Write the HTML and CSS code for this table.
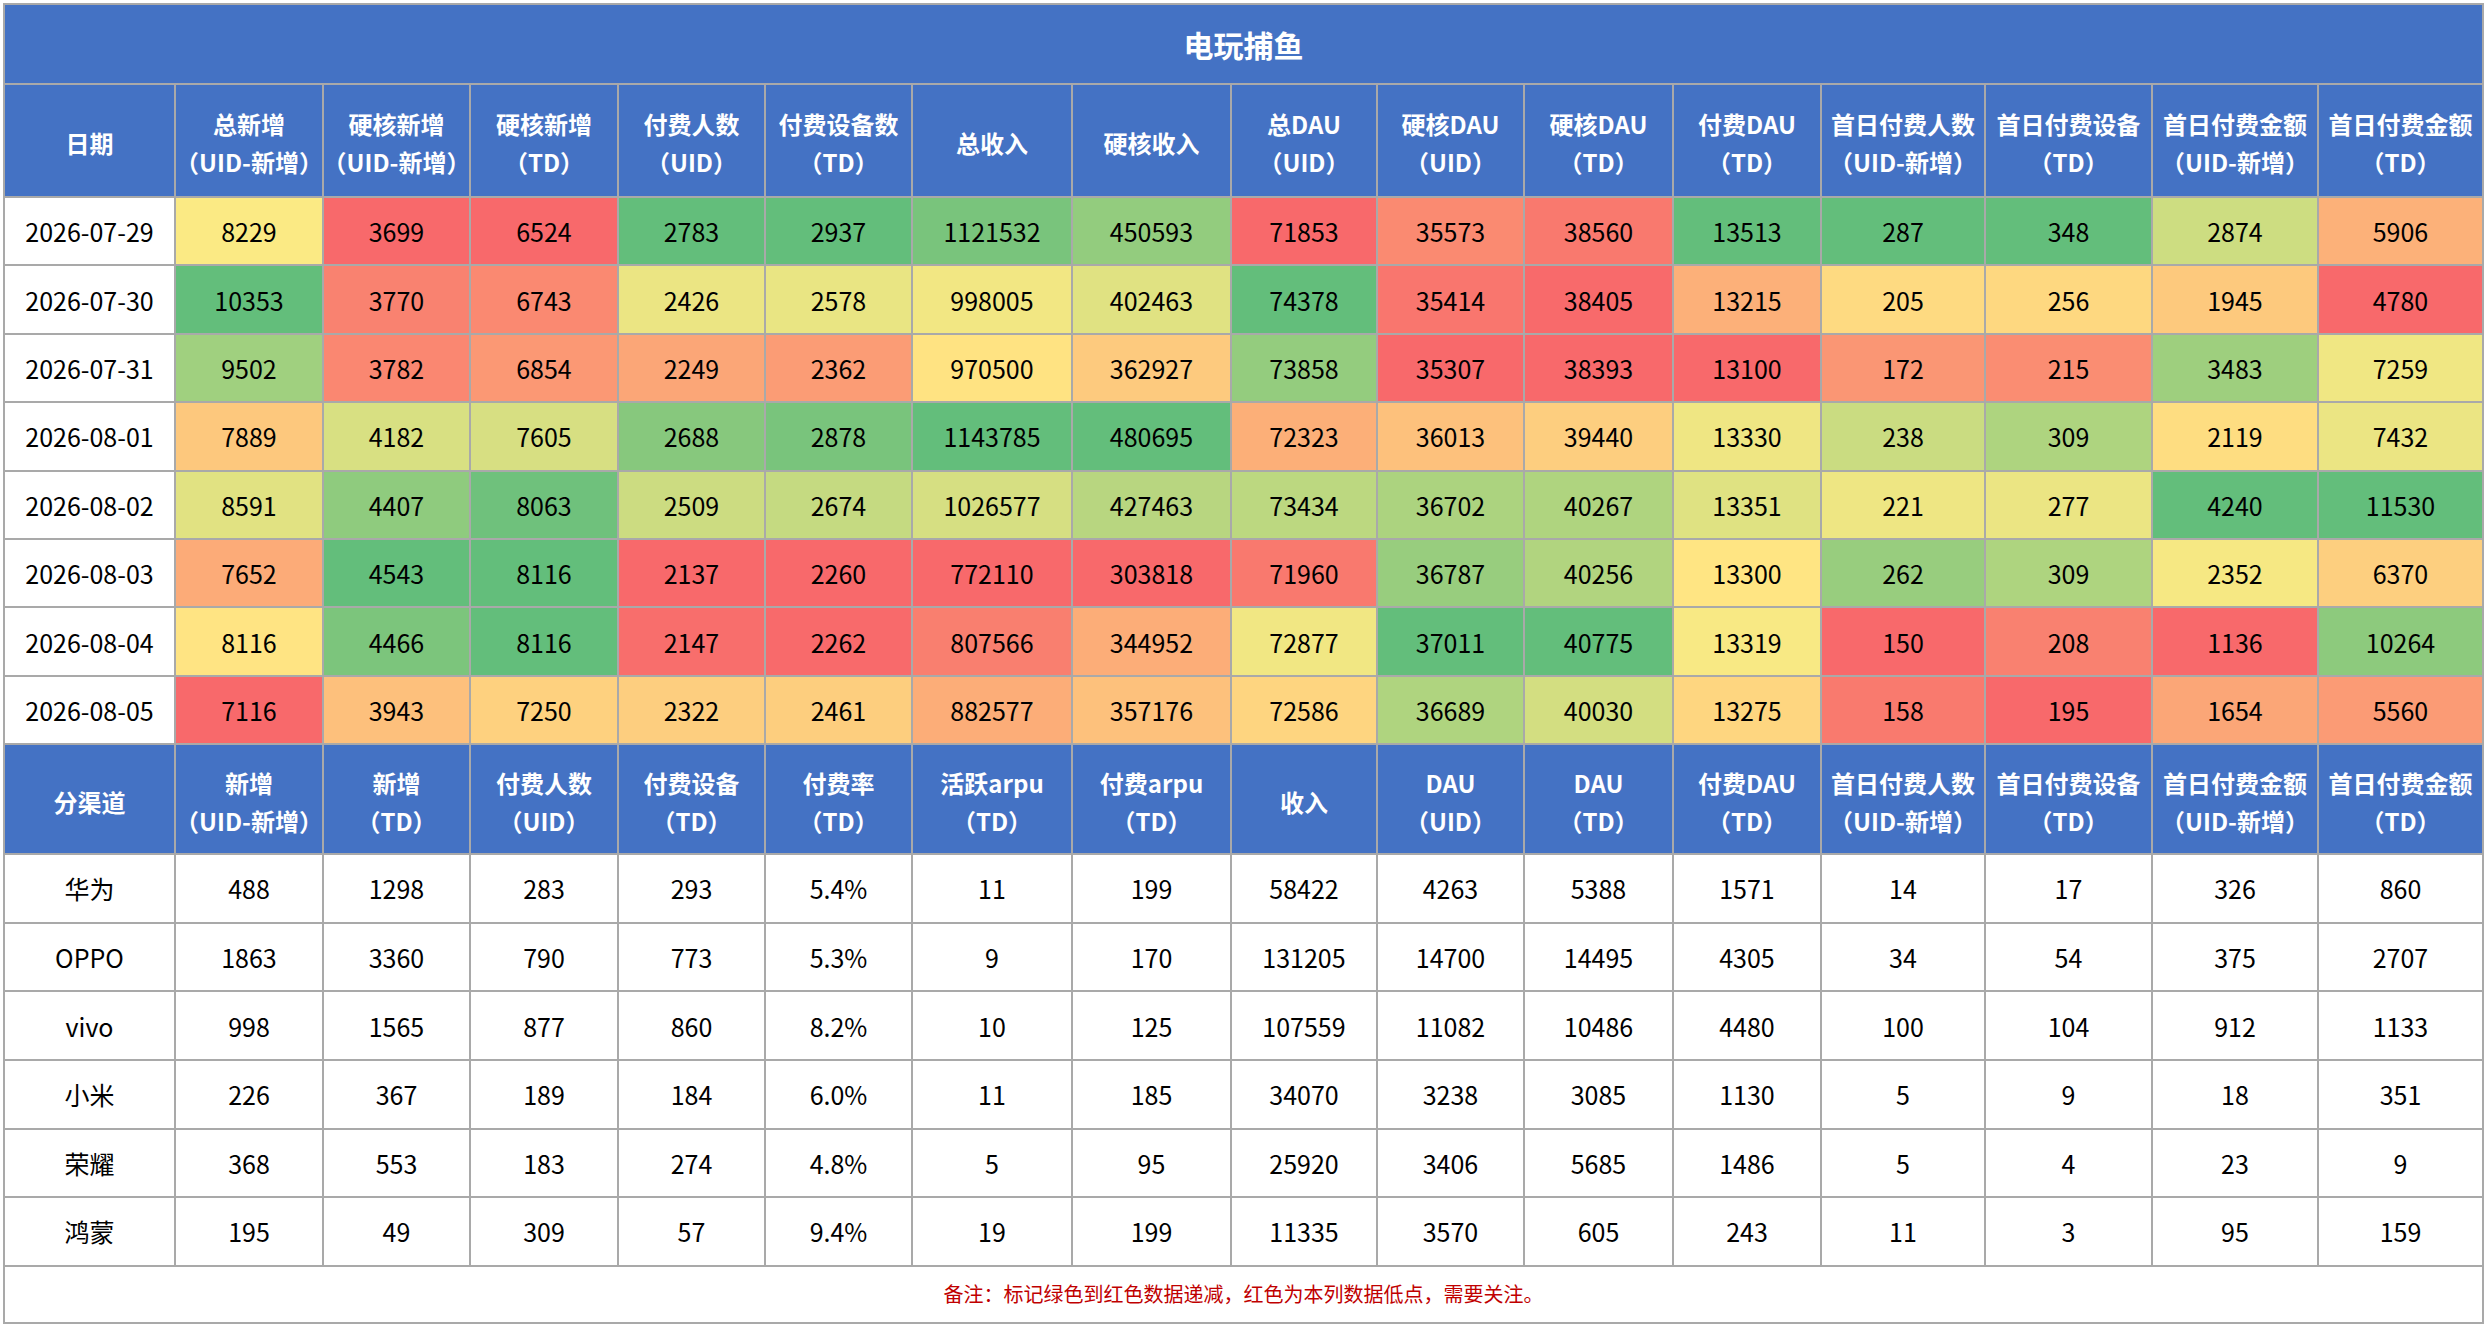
FILE: index.html
```html
<!DOCTYPE html>
<html lang="zh-CN">
<head>
<meta charset="utf-8">
<title>电玩捕鱼</title>
<link rel="stylesheet" href="styles.css">
</head>
<body>
<table class="report">
  <colgroup>
    <col class="c-first">
    <col class="c-148"><col class="c-147"><col class="c-148"><col class="c-147"><col class="c-147">
    <col class="c-160"><col class="c-159"><col class="c-146"><col class="c-147"><col class="c-149">
    <col class="c-148"><col class="c-164"><col class="c-167"><col class="c-166"><col class="c-165">
  </colgroup>
  <tbody>
    <tr class="title-row"><th colspan="16">电玩捕鱼</th></tr>
    <tr class="head-row">
      <th>日期</th>
      <th>总新增<span class="l2">（UID-新增）</span></th>
      <th>硬核新增<span class="l2">（UID-新增）</span></th>
      <th>硬核新增<span class="l2">（TD）</span></th>
      <th>付费人数<span class="l2">（UID）</span></th>
      <th>付费设备数<span class="l2">（TD）</span></th>
      <th>总收入</th>
      <th>硬核收入</th>
      <th>总DAU<span class="l2">（UID）</span></th>
      <th>硬核DAU<span class="l2">（UID）</span></th>
      <th>硬核DAU<span class="l2">（TD）</span></th>
      <th>付费DAU<span class="l2">（TD）</span></th>
      <th>首日付费人数<span class="l2">（UID-新增）</span></th>
      <th>首日付费设备<span class="l2">（TD）</span></th>
      <th>首日付费金额<span class="l2">（UID-新增）</span></th>
      <th>首日付费金额<span class="l2">（TD）</span></th>
    </tr>
    <tr class="scale"><td>2026-07-29</td><td>8229</td><td>3699</td><td>6524</td><td>2783</td><td>2937</td><td>1121532</td><td>450593</td><td>71853</td><td>35573</td><td>38560</td><td>13513</td><td>287</td><td>348</td><td>2874</td><td>5906</td></tr>
    <tr class="scale"><td>2026-07-30</td><td>10353</td><td>3770</td><td>6743</td><td>2426</td><td>2578</td><td>998005</td><td>402463</td><td>74378</td><td>35414</td><td>38405</td><td>13215</td><td>205</td><td>256</td><td>1945</td><td>4780</td></tr>
    <tr class="scale"><td>2026-07-31</td><td>9502</td><td>3782</td><td>6854</td><td>2249</td><td>2362</td><td>970500</td><td>362927</td><td>73858</td><td>35307</td><td>38393</td><td>13100</td><td>172</td><td>215</td><td>3483</td><td>7259</td></tr>
    <tr class="scale"><td>2026-08-01</td><td>7889</td><td>4182</td><td>7605</td><td>2688</td><td>2878</td><td>1143785</td><td>480695</td><td>72323</td><td>36013</td><td>39440</td><td>13330</td><td>238</td><td>309</td><td>2119</td><td>7432</td></tr>
    <tr class="scale"><td>2026-08-02</td><td>8591</td><td>4407</td><td>8063</td><td>2509</td><td>2674</td><td>1026577</td><td>427463</td><td>73434</td><td>36702</td><td>40267</td><td>13351</td><td>221</td><td>277</td><td>4240</td><td>11530</td></tr>
    <tr class="scale"><td>2026-08-03</td><td>7652</td><td>4543</td><td>8116</td><td>2137</td><td>2260</td><td>772110</td><td>303818</td><td>71960</td><td>36787</td><td>40256</td><td>13300</td><td>262</td><td>309</td><td>2352</td><td>6370</td></tr>
    <tr class="scale"><td>2026-08-04</td><td>8116</td><td>4466</td><td>8116</td><td>2147</td><td>2262</td><td>807566</td><td>344952</td><td>72877</td><td>37011</td><td>40775</td><td>13319</td><td>150</td><td>208</td><td>1136</td><td>10264</td></tr>
    <tr class="scale"><td>2026-08-05</td><td>7116</td><td>3943</td><td>7250</td><td>2322</td><td>2461</td><td>882577</td><td>357176</td><td>72586</td><td>36689</td><td>40030</td><td>13275</td><td>158</td><td>195</td><td>1654</td><td>5560</td></tr>
    <tr class="head-row head-row-2">
      <th>分渠道</th>
      <th>新增<span class="l2">（UID-新增）</span></th>
      <th>新增<span class="l2">（TD）</span></th>
      <th>付费人数<span class="l2">（UID）</span></th>
      <th>付费设备<span class="l2">（TD）</span></th>
      <th>付费率<span class="l2">（TD）</span></th>
      <th>活跃arpu<span class="l2">（TD）</span></th>
      <th>付费arpu<span class="l2">（TD）</span></th>
      <th>收入</th>
      <th>DAU<span class="l2">（UID）</span></th>
      <th>DAU<span class="l2">（TD）</span></th>
      <th>付费DAU<span class="l2">（TD）</span></th>
      <th>首日付费人数<span class="l2">（UID-新增）</span></th>
      <th>首日付费设备<span class="l2">（TD）</span></th>
      <th>首日付费金额<span class="l2">（UID-新增）</span></th>
      <th>首日付费金额<span class="l2">（TD）</span></th>
    </tr>
    <tr class="chan"><td>华为</td><td>488</td><td>1298</td><td>283</td><td>293</td><td>5.4%</td><td>11</td><td>199</td><td>58422</td><td>4263</td><td>5388</td><td>1571</td><td>14</td><td>17</td><td>326</td><td>860</td></tr>
    <tr class="chan"><td>OPPO</td><td>1863</td><td>3360</td><td>790</td><td>773</td><td>5.3%</td><td>9</td><td>170</td><td>131205</td><td>14700</td><td>14495</td><td>4305</td><td>34</td><td>54</td><td>375</td><td>2707</td></tr>
    <tr class="chan"><td>vivo</td><td>998</td><td>1565</td><td>877</td><td>860</td><td>8.2%</td><td>10</td><td>125</td><td>107559</td><td>11082</td><td>10486</td><td>4480</td><td>100</td><td>104</td><td>912</td><td>1133</td></tr>
    <tr class="chan"><td>小米</td><td>226</td><td>367</td><td>189</td><td>184</td><td>6.0%</td><td>11</td><td>185</td><td>34070</td><td>3238</td><td>3085</td><td>1130</td><td>5</td><td>9</td><td>18</td><td>351</td></tr>
    <tr class="chan"><td>荣耀</td><td>368</td><td>553</td><td>183</td><td>274</td><td>4.8%</td><td>5</td><td>95</td><td>25920</td><td>3406</td><td>5685</td><td>1486</td><td>5</td><td>4</td><td>23</td><td>9</td></tr>
    <tr class="chan"><td>鸿蒙</td><td>195</td><td>49</td><td>309</td><td>57</td><td>9.4%</td><td>19</td><td>199</td><td>11335</td><td>3570</td><td>605</td><td>243</td><td>11</td><td>3</td><td>95</td><td>159</td></tr>
    <tr class="note-row"><td colspan="16">备注：标记绿色到红色数据递减，红色为本列数据低点，需要关注。</td></tr>
  </tbody>
</table>
<script src="script.js"></script>
</body>
</html>
```

FILE: styles.css
```css
* { box-sizing: border-box; }

html, body {
  margin: 0;
  padding: 0;
  background: #ffffff;
}

body {
  padding: 3px;
  font-family: "Noto Sans CJK SC", "Noto Sans", sans-serif;
}

.report {
  border-collapse: collapse;
  table-layout: fixed;
  width: 2479px;
}

.c-first { width: 171px; }
.c-146 { width: 146px; }
.c-147 { width: 147px; }
.c-148 { width: 148px; }
.c-149 { width: 149px; }
.c-159 { width: 159px; }
.c-160 { width: 160px; }
.c-164 { width: 164px; }
.c-165 { width: 165px; }
.c-166 { width: 166px; }
.c-167 { width: 167px; }

.report th,
.report td {
  border: 2px solid #a9a9a9;
  padding: 0;
  text-align: center;
  vertical-align: middle;
  white-space: nowrap;
}

.report td {
  font-size: 25px;
  line-height: 36px;
  color: #000000;
  background: #ffffff;
}

.report th {
  background: #4472c4;
  color: #ffffff;
  font-weight: 700;
  font-size: 24px;
  line-height: 38px;
  font-feature-settings: "halt";
}

.report th .l2 {
  display: block;
}

.title-row { height: 80px; }
.title-row th {
  font-size: 30px;
  line-height: 40px;
}

.head-row { height: 113px; }
.head-row th { padding-top: 5px; }
.head-row-2 { height: 110px; }

.scale { height: 68.4px; }
.chan { height: 68.6px; }

.note-row { height: 57px; }
.note-row td {
  font-size: 20px;
  line-height: 28px;
  color: #c00000;
}
```

FILE: script.js
```js
(function () {
  var rows = Array.prototype.slice.call(document.querySelectorAll('.report tr.scale'));
  if (!rows.length) return;
  var lo = [248, 105, 107], mid = [255, 235, 132], hi = [99, 190, 123];
  var ncol = rows[0].cells.length;
  for (var c = 1; c < ncol; c++) {
    var cells = rows.map(function (r) { return r.cells[c]; });
    var vals = cells.map(function (td) { return parseFloat(td.textContent); });
    var s = vals.slice().sort(function (a, b) { return a - b; });
    var pos = (s.length - 1) * 0.5, i = Math.floor(pos), f = pos - i;
    var med = s[i] + (i + 1 < s.length ? (s[i + 1] - s[i]) * f : 0);
    var mn = s[0], mx = s[s.length - 1];
    cells.forEach(function (td, k) {
      var v = vals[k], a, b, t;
      if (v <= med) { a = lo; b = mid; t = med === mn ? 1 : (v - mn) / (med - mn); }
      else { a = mid; b = hi; t = (v - med) / (mx - med); }
      var col = a.map(function (x, j) { return Math.round(x + (b[j] - x) * t); });
      td.style.backgroundColor = 'rgb(' + col.join(',') + ')';
    });
  }
})();
```
